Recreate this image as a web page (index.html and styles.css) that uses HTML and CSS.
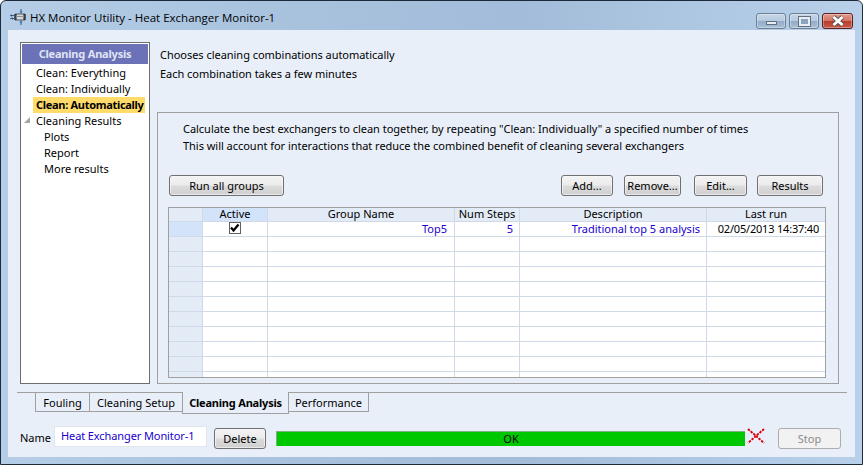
FILE: index.html
```html
<!DOCTYPE html>
<html lang="en">
<head>
    <meta charset="UTF-8">
    <title>HX Monitor Utility - Heat Exchanger Monitor-1</title>
    <link rel="stylesheet" href="styles.css">
</head>
<body>

    <div class="Window">

        <div class="TitleBar">
            <svg class="AppIcon" width="18" height="18" viewBox="0 0 18 18">
                <path d="M6 6h10v6H6z" fill="#d4d8dd" stroke="#555"/>
                <path d="M6 6v6M7 6v6M15 6v6M16 6v6" stroke="#222"/>
                <path d="M7 8.5h8" stroke="#8a8f96"/>
                <path d="M12 1v3M12 14v3" stroke="#2c5f9e"/>
                <path d="M10.5 3.5L12 5.5l1.5-2zM10.5 14.5L12 12.5l1.5 2z" fill="#2c5f9e"/>
                <path d="M1 7.5h4M1 10.5h4" stroke="#2c5f9e"/>
                <path d="M3 6l-1.5 1.5L3 9zM3 9l1.5 1.5L3 12z" fill="#2c5f9e"/>
            </svg>
            <span class="Title">HX Monitor Utility - Heat Exchanger Monitor-1</span>
            <div class="Caption">
                <div class="CapBtn"><i class="Min"></i></div>
                <div class="CapBtn"><i class="Max"></i></div>
                <div class="CapBtn Close">
                    <svg width="16" height="12" viewBox="0 0 16 12"><path d="M3.5 2l9 8M12.5 2l-9 8" stroke="#4a4a4a" stroke-width="4.4"/><path d="M3.5 2l9 8M12.5 2l-9 8" stroke="#fff" stroke-width="3"/></svg>
                </div>
            </div>
        </div>

        <div class="Client">

            <div class="Main">

                <div class="Nav">
                    <div class="NavHead">Cleaning Analysis</div>
                    <div class="NavItem">Clean: Everything</div>
                    <div class="NavItem">Clean: Individually</div>
                    <div class="NavItem Sel">Clean: Automatically</div>
                    <div class="NavItem Parent"><b class="Tri"></b>Cleaning Results</div>
                    <div class="NavItem Sub">Plots</div>
                    <div class="NavItem Sub">Report</div>
                    <div class="NavItem Sub">More results</div>
                </div>

                <div class="Content">

                    <div class="Intro">
                        <p>Chooses cleaning combinations automatically</p>
                        <p>Each combination takes a few minutes</p>
                    </div>

                    <div class="Group">

                        <div class="GroupText">
                            <p>Calculate the best exchangers to clean together, by repeating "Clean: Individually" a specified number of times</p>
                            <p>This will account for interactions that reduce the combined benefit of cleaning several exchangers</p>
                        </div>

                        <div class="Tools">
                            <button class="Btn RunAll">Run all groups</button>
                            <span class="Gap"></span>
                            <button class="Btn Add">Add...</button>
                            <button class="Btn Remove">Remove...</button>
                            <button class="Btn Edit">Edit...</button>
                            <button class="Btn Results">Results</button>
                        </div>

                        <div class="Grid">
                            <div class="Row Head">
                                <div class="Cell Rh"></div>
                                <div class="Cell Ca On">Active</div>
                                <div class="Cell Cb">Group Name</div>
                                <div class="Cell Cc">Num Steps</div>
                                <div class="Cell Cd">Description</div>
                                <div class="Cell Ce">Last run</div>
                            </div>
                            <div class="Row">
                                <div class="Cell Rh On"></div>
                                <div class="Cell Ca"><span class="Check"><svg width="10" height="10" viewBox="0 0 10 10"><path d="M1 4.5l2.5 3 5-6" fill="none" stroke="#000" stroke-width="2.2"/></svg></span></div>
                                <div class="Cell Cb Val">Top5</div>
                                <div class="Cell Cc Val">5</div>
                                <div class="Cell Cd Val">Traditional top 5 analysis</div>
                                <div class="Cell Ce Date">02/05/2013 14:37:40</div>
                            </div>
                            <div class="Row"><div class="Cell Rh"></div><div class="Cell Ca"></div><div class="Cell Cb"></div><div class="Cell Cc"></div><div class="Cell Cd"></div><div class="Cell Ce"></div></div>
                            <div class="Row"><div class="Cell Rh"></div><div class="Cell Ca"></div><div class="Cell Cb"></div><div class="Cell Cc"></div><div class="Cell Cd"></div><div class="Cell Ce"></div></div>
                            <div class="Row"><div class="Cell Rh"></div><div class="Cell Ca"></div><div class="Cell Cb"></div><div class="Cell Cc"></div><div class="Cell Cd"></div><div class="Cell Ce"></div></div>
                            <div class="Row"><div class="Cell Rh"></div><div class="Cell Ca"></div><div class="Cell Cb"></div><div class="Cell Cc"></div><div class="Cell Cd"></div><div class="Cell Ce"></div></div>
                            <div class="Row"><div class="Cell Rh"></div><div class="Cell Ca"></div><div class="Cell Cb"></div><div class="Cell Cc"></div><div class="Cell Cd"></div><div class="Cell Ce"></div></div>
                            <div class="Row"><div class="Cell Rh"></div><div class="Cell Ca"></div><div class="Cell Cb"></div><div class="Cell Cc"></div><div class="Cell Cd"></div><div class="Cell Ce"></div></div>
                            <div class="Row"><div class="Cell Rh"></div><div class="Cell Ca"></div><div class="Cell Cb"></div><div class="Cell Cc"></div><div class="Cell Cd"></div><div class="Cell Ce"></div></div>
                            <div class="Row"><div class="Cell Rh"></div><div class="Cell Ca"></div><div class="Cell Cb"></div><div class="Cell Cc"></div><div class="Cell Cd"></div><div class="Cell Ce"></div></div>
                            <div class="Row"><div class="Cell Rh"></div><div class="Cell Ca"></div><div class="Cell Cb"></div><div class="Cell Cc"></div><div class="Cell Cd"></div><div class="Cell Ce"></div></div>
                            <div class="Row"><div class="Cell Rh"></div><div class="Cell Ca"></div><div class="Cell Cb"></div><div class="Cell Cc"></div><div class="Cell Cd"></div><div class="Cell Ce"></div></div>
                        </div>

                    </div>

                </div>

            </div>

            <div class="Tabs">
                <div class="Tab">Fouling</div>
                <div class="Tab">Cleaning Setup</div>
                <div class="Tab Active">Cleaning Analysis</div>
                <div class="Tab">Performance</div>
            </div>

            <div class="Status">
                <label class="NameLbl">Name</label>
                <div class="NameBox">Heat Exchanger Monitor-1</div>
                <button class="Btn Delete">Delete</button>
                <div class="Bar">OK</div>
                <svg class="Cross" width="18" height="16" viewBox="0 0 18 16">
                    <path d="M1 1l16 14M17 1L1 15" stroke="#fff" stroke-width="2.6"/>
                    <path d="M1 1l16 14M17 1L1 15" stroke="#d00018" stroke-width="2" stroke-dasharray="2.5 1"/>
                </svg>
                <button class="Btn Stop">Stop</button>
            </div>

        </div>

    </div>

</body>
</html>
```

FILE: styles.css
```css
* {
    box-sizing: border-box;
}

html, body {
    margin: 0;
    height: 100%;
    overflow: hidden;
    background: #fff;
}

body {
    font-family: "Noto Sans", "DejaVu Sans", sans-serif;
    font-size: 11px;
    color: #000;
}

p {
    margin: 0;
}

.Window {
    height: 465px;
    display: flex;
    flex-direction: column;
    padding: 0 7px 7px 7px;
    border: 1px solid #1b2a36;
    border-radius: 6px 6px 0 0;
    background: linear-gradient(90deg, #b5cde6 0%, #a9c3df 30%, #a2bcd9 60%, #b8d0ea 100%);
}

.TitleBar {
    height: 29px;
    flex: none;
    display: flex;
    align-items: center;
    padding-top: 3px;
}

.AppIcon {
    flex: none;
    margin-left: 1px;
}

.Title {
    margin-left: 3px;
    font-family: "Open Sans", sans-serif;
    font-size: 11.5px;
    color: #000;
}

.Caption {
    margin-left: auto;
    margin-right: 2px;
    display: flex;
    gap: 3px;
    align-self: flex-start;
    margin-top: 9px;
}

.CapBtn {
    width: 30px;
    height: 16px;
    display: flex;
    align-items: center;
    justify-content: center;
    border: 1px solid #6d7f95;
    border-radius: 3px;
    background: linear-gradient(#c6d6e8 0%, #b7cade 48%, #93abc6 52%, #a9c0d8 100%);
    box-shadow: inset 0 0 0 1px #ffffff55;
}

.CapBtn .Min {
    width: 11px;
    height: 4px;
    margin-top: 4px;
    background: #e8edf3;
    border: 1px solid #5f6f82;
}

.CapBtn .Max {
    width: 11px;
    height: 9px;
    border: 2px solid #e8edf3;
    outline: 1px solid #5f6f82;
    background: #8ba5c0;
}

.CapBtn.Close {
    width: 31px;
    border-color: #5c1f1d;
    background: linear-gradient(#e09a8c 0%, #d47563 48%, #b83c2b 52%, #c75a48 100%);
}

.Client {
    flex: 1;
    display: flex;
    flex-direction: column;
    padding: 12px 16px 0 12px;
    background: #e8eff9;
}

.Main {
    display: flex;
    height: 342px;
    flex: none;
}

.Nav {
    width: 130px;
    flex: none;
    background: #fff;
    border: 1px solid #6e6e6e;
    padding: 1px;
}

.NavHead {
    height: 20px;
    line-height: 20px;
    text-align: center;
    font-weight: 700;
    letter-spacing: -0.2px;
    color: #e0e4f4;
    background: #6b72b8;
}

.NavItem {
    height: 16px;
    line-height: 16px;
    margin-left: 11px;
    padding-left: 3px;
    margin-right: 3px;
    white-space: nowrap;
    position: relative;
}

.NavHead + .NavItem {
    margin-top: 1px;
}

.NavItem.Sel {
    background: #ffdb69;
    font-weight: 700;
    letter-spacing: -0.3px;
}

.NavItem.Sub {
    margin-left: 19px;
}

.Tri {
    position: absolute;
    left: -9px;
    top: 4px;
    width: 0;
    height: 0;
    border-left: 6px solid transparent;
    border-bottom: 6px solid #a6a6a6;
}

.Content {
    flex: 1;
    margin-left: 7px;
    display: flex;
    flex-direction: column;
    min-width: 0;
}

.Intro {
    height: 70px;
    flex: none;
    padding: 3px 0 0 3px;
    letter-spacing: -0.03px;
}

.Intro p {
    height: 19px;
    line-height: 19px;
}

.Group {
    flex: 1;
    border: 1px solid #a0a0a0;
    padding: 7px 12px 5px 10px;
    display: flex;
    flex-direction: column;
}

.GroupText {
    padding-left: 15px;
    height: 55px;
    flex: none;
    letter-spacing: -0.03px;
}

.GroupText p {
    height: 17px;
    line-height: 17px;
}

.Tools {
    display: flex;
    height: 21px;
    flex: none;
    margin-right: 3px;
    margin-left: 1px;
}

.Gap {
    flex: 1;
}

.Btn {
    height: 21px;
    padding: 0;
    font: inherit;
    color: #000;
    border: 1px solid #707070;
    border-radius: 3px;
    background: linear-gradient(#f3f3f3 0%, #ebebeb 48%, #dcdcdc 52%, #cfcfcf 100%);
    box-shadow: inset 0 0 0 1px #f8f8f8aa;
}

.RunAll { width: 115px; }
.Add { width: 52px; }
.Remove { width: 57px; margin-left: 11px; }
.Edit { width: 53px; margin-left: 13px; }
.Results { width: 66px; margin-left: 10px; }

.Grid {
    margin-top: 11px;
    height: 171px;
    flex: none;
    border: 1px solid #a0a0a0;
    background: #fff;
    overflow: hidden;
    display: flex;
    flex-direction: column;
}

.Row {
    display: flex;
    height: 15px;
    flex: none;
}

.Row.Head {
    height: 14px;
    background: #e3ebf6;
}

.Cell {
    border-right: 1px solid #d0d9e8;
    border-bottom: 1px solid #d0d9e8;
    line-height: 13px;
    white-space: nowrap;
}

.Head .Cell {
    line-height: 11px;
    text-align: center;
    border-bottom: 1px solid #d0d9e8;
}

.Rh {
    width: 34px;
    background: #e3ebf6;
}

.Ca { width: 65px; text-align: center; }
.Cb { width: 187px; }
.Cc { width: 65px; }
.Cd { width: 187px; }
.Ce { flex: 1; border-right: none; }

.On {
    background: #d2e3fa !important;
}

.Val {
    text-align: right;
    padding-right: 7px;
    color: #2000d0;
}

.Cc.Val {
    padding-right: 6px;
}

.Cd.Val {
    padding-right: 6px;
}

.Date {
    text-align: right;
    padding-right: 6px;
    letter-spacing: -0.2px;
}

.Check {
    display: inline-block;
    width: 12px;
    height: 12px;
    background: #fff;
    border: 1px solid #606060;
    line-height: 0;
    vertical-align: top;
}

.Tabs {
    margin: 8px -8px 0 -3px;
    padding-left: 19px;
    height: 23px;
    flex: none;
    display: flex;
    align-items: flex-start;
    border-top: 1px solid #a0a0a0;
}

.Tab {
    height: 19px;
    line-height: 19px;
    text-align: center;
    border: 1px solid #a0a0a0;
    border-top: none;
    margin-left: -1px;
}

.Tab:nth-child(1) { width: 55px; }
.Tab:nth-child(2) { width: 94px; }
.Tab:nth-child(3) { width: 107px; }
.Tab:nth-child(4) { width: 81px; }

.Tab.Active {
    height: 22px;
    font-weight: 700;
    letter-spacing: -0.2px;
    margin-top: -1px;
    padding-top: 1px;
    background: #e8eff9;
}

.Status {
    margin-top: 11px;
    display: flex;
    align-items: flex-start;
    height: 24px;
    margin-right: -2px;
}

.NameLbl {
    width: 34px;
    flex: none;
    height: 21px;
    line-height: 24px;
}

.NameBox {
    width: 153px;
    height: 21px;
    line-height: 17px;
    padding-left: 6px;
    flex: none;
    background: #fff;
    border: 1px solid #dfe6f0;
    color: #2000d0;
    letter-spacing: -0.1px;
}

.Delete {
    width: 52px;
    margin: 2px 0 0 7px;
    flex: none;
}

.Bar {
    width: 469px;
    height: 15px;
    flex: none;
    margin: 5px 0 0 10px;
    line-height: 14px;
    text-align: center;
    background: #00c800;
    border-top: 1px solid #7fb07f;
    border-left: 1px solid #7fb07f;
}

.Cross {
    flex: none;
    margin: 2px 0 0 2px;
}

.Stop {
    width: 63px;
    margin: 2px 0 0 13px;
    flex: none;
    color: #8a8a8a;
    background: #f2f2f2;
    border-color: #adadad;
    box-shadow: none;
}
```
